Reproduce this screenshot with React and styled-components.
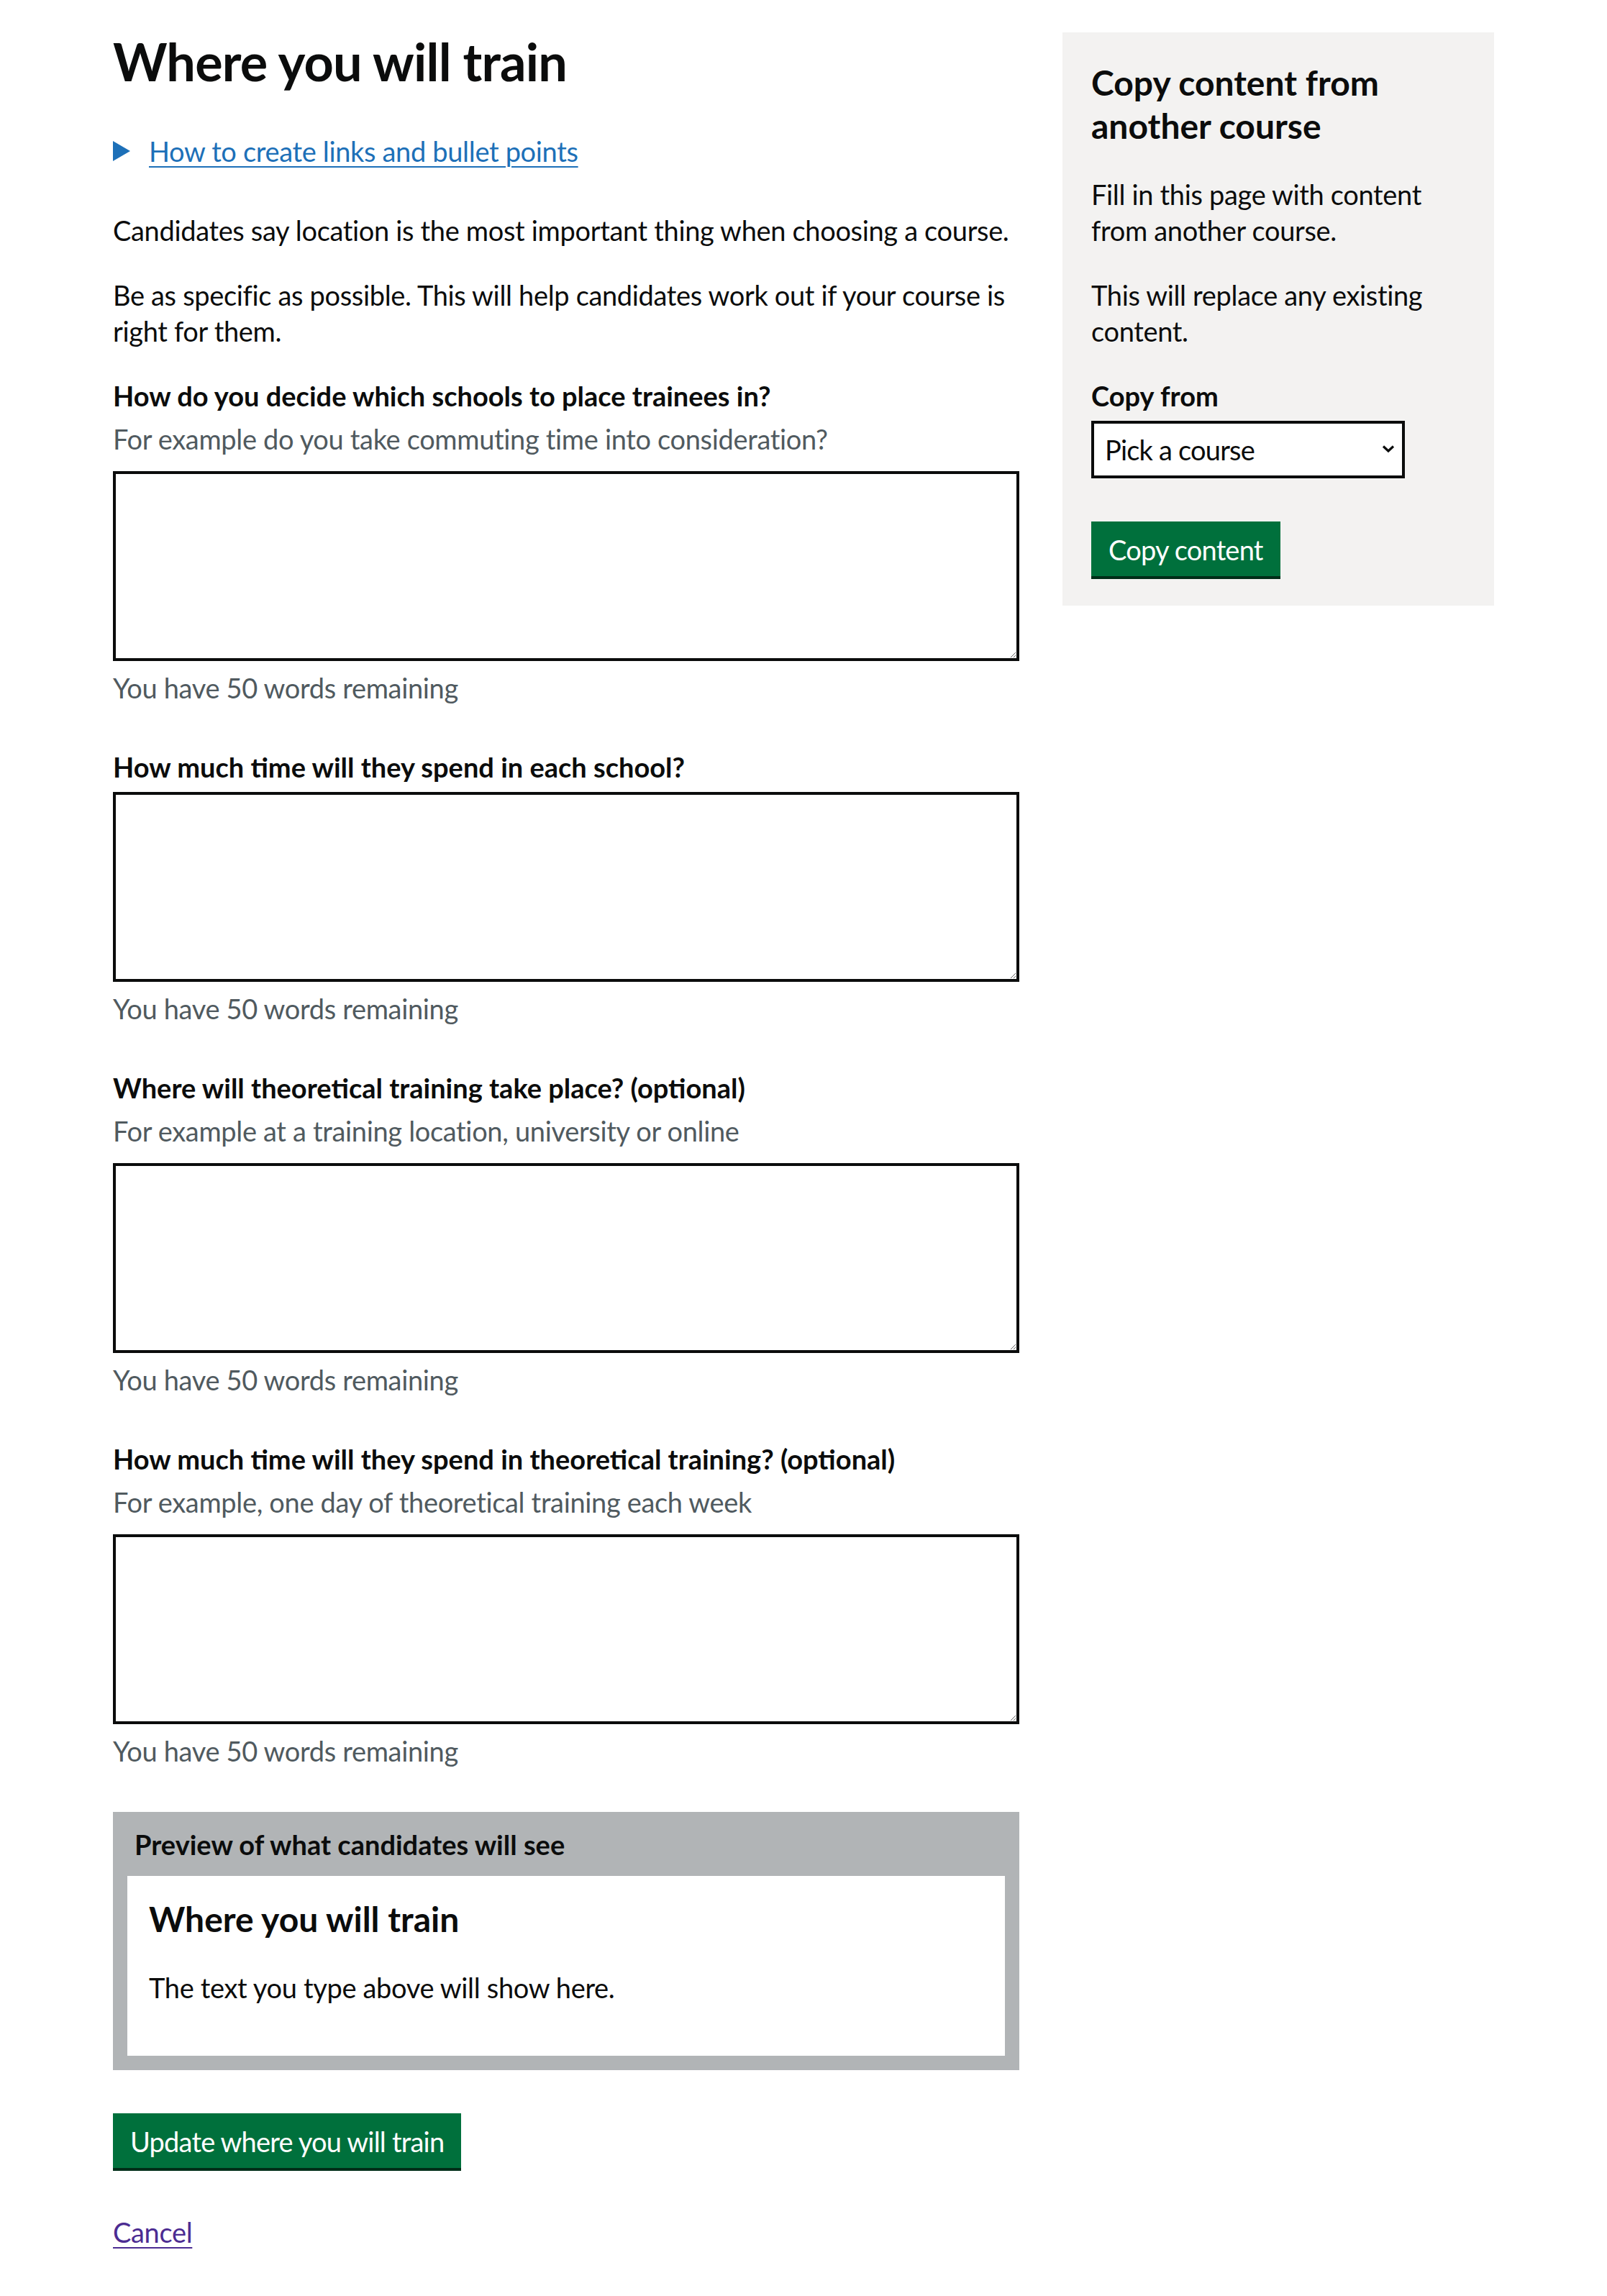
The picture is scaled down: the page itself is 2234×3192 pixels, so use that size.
import React from "react";
import styled, { createGlobalStyle } from "styled-components";

const font = `Lato, "Liberation Sans", Arial, sans-serif`;

const GlobalStyle = createGlobalStyle`
  html, body {
    margin: 0;
    padding: 0;
    background: #ffffff;
  }
  body {
    font-family: ${font};
    color: #0b0c0c;
    letter-spacing: -0.021em;
  }
  * {
    box-sizing: border-box;
  }
`;

const Container = styled.div`
  max-width: 1920px;
  margin: 0 auto;
  padding-top: 45px;
  padding-bottom: 60px;
`;

const Row = styled.div`
  display: grid;
  grid-template-columns: 1260px 600px;
  column-gap: 60px;
  align-items: start;
`;

const Main = styled.main``;

const HeadingL = styled.h1`
  font-size: 72px;
  line-height: 80px;
  font-weight: 700;
  letter-spacing: -0.011em;
  margin: 0 0 60px;
`;

const Details = styled.details`
  margin: 0 0 60px;
  font-size: 38px;
  line-height: 50px;
`;

const Summary = styled.summary`
  display: inline-block;
  position: relative;
  padding-left: 50px;
  color: #1d70b8;
  cursor: pointer;
  list-style: none;
  &::-webkit-details-marker {
    display: none;
  }
  &::before {
    content: "";
    position: absolute;
    left: 0;
    top: 11px;
    border-style: solid;
    border-color: transparent;
    border-left-color: #1d70b8;
    border-width: 14px 0 14px 24px;
  }
`;

const SummaryText = styled.span`
  text-decoration: underline;
  text-decoration-thickness: 2px;
  text-underline-offset: 6px;
`;

const Body = styled.p`
  font-size: 38px;
  line-height: 50px;
  margin: 0 0 40px;
`;

const FormGroup = styled.div`
  margin-bottom: ${(p) => p.$mb ?? 60}px;
`;

const Label = styled.label`
  display: block;
  font-size: 38px;
  line-height: 50px;
  font-weight: 700;
  letter-spacing: 0;
  margin-bottom: 10px;
`;

const Hint = styled.div`
  font-size: 38px;
  line-height: 50px;
  color: #505a5f;
  margin-bottom: 20px;
`;

const TextArea = styled.textarea`
  display: block;
  width: 100%;
  height: 264px;
  margin: 0 0 12px;
  padding: 10px;
  border: 4px solid #0b0c0c;
  border-radius: 0;
  font-family: ${font};
  font-size: 38px;
  line-height: 1.25;
  resize: vertical;
`;

const Count = styled.div`
  font-size: 38px;
  line-height: 50px;
  color: #505a5f;
`;

const Preview = styled.section`
  background: #b1b4b6;
  padding: 20px;
  margin-bottom: 60px;
`;

const PreviewTitle = styled.h2`
  font-size: 38px;
  line-height: 50px;
  font-weight: 700;
  letter-spacing: 0;
  margin: 0 10px 19px;
`;

const PreviewCard = styled.div`
  background: #ffffff;
  padding: 30px;
`;

const HeadingM = styled.h2`
  font-size: 48px;
  line-height: 60px;
  font-weight: 700;
  letter-spacing: 0;
  margin: 0 0 40px;
`;

const Button = styled.button`
  display: inline-block;
  font-family: ${font};
  font-size: 38px;
  line-height: 38px;
  letter-spacing: -0.021em;
  color: #ffffff;
  background: #00703c;
  border: 4px solid transparent;
  border-radius: 0;
  padding: 16px 20px 14px;
  box-shadow: 0 4px 0 #002d18;
  margin: 0 0 ${(p) => p.$mb ?? 64}px;
  cursor: pointer;
`;

const Cancel = styled.a`
  display: inline-block;
  font-size: 38px;
  line-height: 50px;
  color: #4c2c92;
  text-decoration: underline;
  text-decoration-thickness: 2px;
  text-underline-offset: 6px;
`;

const Sidebar = styled.aside`
  background: #f3f2f1;
  padding: 40px 40px 41px;
`;

const SelectWrap = styled.div`
  position: relative;
  width: 436px;
`;

const Select = styled.select`
  display: block;
  width: 100%;
  height: 80px;
  padding: 0 50px 0 15px;
  border: 4px solid #0b0c0c;
  border-radius: 0;
  background: #ffffff;
  color: #0b0c0c;
  font-family: ${font};
  font-size: 38px;
  letter-spacing: -0.021em;
  appearance: none;
  -webkit-appearance: none;
`;

const Chevron = styled.svg`
  position: absolute;
  right: 14px;
  top: 33px;
  width: 18px;
  height: 12px;
  pointer-events: none;
`;

const questions = [
  {
    id: "placement",
    label: "How do you decide which schools to place trainees in?",
    hint: "For example do you take commuting time into consideration?",
  },
  {
    id: "time-school",
    label: "How much time will they spend in each school?",
  },
  {
    id: "theory-where",
    label: "Where will theoretical training take place? (optional)",
    hint: "For example at a training location, university or online",
  },
  {
    id: "theory-time",
    label: "How much time will they spend in theoretical training? (optional)",
    hint: "For example, one day of theoretical training each week",
  },
];

const Question = ({ id, label, hint }) => (
  <FormGroup>
    <Label htmlFor={id}>{label}</Label>
    {hint && <Hint>{hint}</Hint>}
    <TextArea id={id} rows={5} />
    <Count>You have 50 words remaining</Count>
  </FormGroup>
);

const App = () => (
  <>
    <GlobalStyle />
    <Container>
      <Row>
        <Main>
          <HeadingL>Where you will train</HeadingL>
          <Details>
            <Summary>
              <SummaryText>How to create links and bullet points</SummaryText>
            </Summary>
          </Details>
          <Body>
            Candidates say location is the most important thing when choosing a
            course.
          </Body>
          <Body>
            Be as specific as possible. This will help candidates work out if
            your course is right for them.
          </Body>
          {questions.map((q) => (
            <Question key={q.id} {...q} />
          ))}
          <Preview>
            <PreviewTitle>Preview of what candidates will see</PreviewTitle>
            <PreviewCard>
              <HeadingM>Where you will train</HeadingM>
              <Body>The text you type above will show here.</Body>
            </PreviewCard>
          </Preview>
          <Button>Update where you will train</Button>
          <div>
            <Cancel href="#">Cancel</Cancel>
          </div>
        </Main>
        <Sidebar>
          <HeadingM>
            Copy content from
            <br />
            another course
          </HeadingM>
          <Body>Fill in this page with content from another course.</Body>
          <Body>This will replace any existing content.</Body>
          <FormGroup>
            <Label htmlFor="copy-from">Copy from</Label>
            <SelectWrap>
              <Select id="copy-from" defaultValue="">
                <option value="">Pick a course</option>
              </Select>
              <Chevron viewBox="0 0 18 12" aria-hidden="true">
                <path
                  d="M2 2.5 L9 9 L16 2.5"
                  fill="none"
                  stroke="#0b0c0c"
                  strokeWidth="3.2"
                />
              </Chevron>
            </SelectWrap>
          </FormGroup>
          <Button $mb={0}>Copy content</Button>
        </Sidebar>
      </Row>
    </Container>
  </>
);

export default App;
